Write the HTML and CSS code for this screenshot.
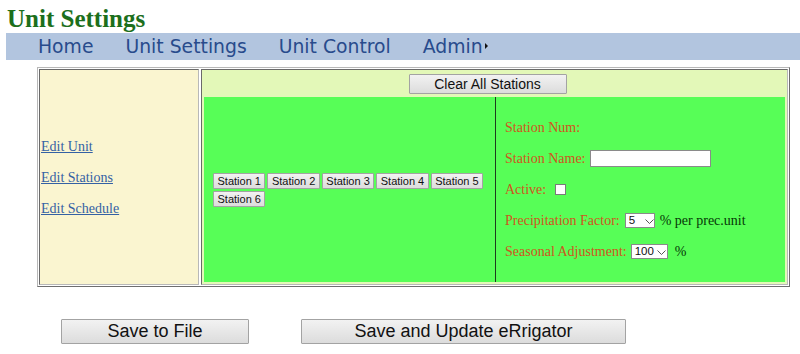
FILE: index.html
```html
<!DOCTYPE html>
<html>
<head>
<meta charset="utf-8">
<title>Unit Settings</title>
<link rel="stylesheet" href="styles.css">
</head>
<body>
<h1 class="title">Unit Settings</h1>
<nav class="nav">
  <a class="nav-item" href="#">Home</a>
  <a class="nav-item" href="#">Unit Settings</a>
  <a class="nav-item" href="#">Unit Control</a>
  <a class="nav-item" href="#">Admin<span class="caret"></span></a>
</nav>
<div class="frame">
  <div class="side">
    <a class="link" href="#">Edit Unit</a>
    <a class="link" href="#">Edit Stations</a>
    <a class="link" href="#">Edit Schedule</a>
  </div>
  <div class="main">
    <div class="toolbar"><button class="btn btn-clear">Clear All Stations</button></div>
    <div class="panel">
      <div class="stations">
        <div class="station-list">
          <button class="btn btn-station">Station 1</button>
          <button class="btn btn-station">Station 2</button>
          <button class="btn btn-station">Station 3</button>
          <button class="btn btn-station">Station 4</button>
          <button class="btn btn-station">Station 5</button>
          <button class="btn btn-station">Station 6</button>
        </div>
      </div>
      <div class="form">
        <div class="row"><span class="label">Station Num:</span></div>
        <div class="row"><span class="label">Station Name:</span><input class="text-input" type="text"></div>
        <div class="row"><span class="label">Active:</span><input class="check" type="checkbox"></div>
        <div class="row"><span class="label">Precipitation Factor:</span><select class="sel sel-precip"><option>5</option></select><span class="unit">% per prec.unit</span></div>
        <div class="row"><span class="label">Seasonal Adjustment:</span><select class="sel sel-season"><option>100</option></select><span class="unit unit-pct">%</span></div>
      </div>
    </div>
  </div>
</div>
<div class="actions">
  <button class="btn btn-big btn-save">Save to File</button>
  <button class="btn btn-big btn-update">Save and Update eRrigator</button>
</div>
</body>
</html>
```

FILE: styles.css
```css
html, body {
  margin: 0;
  padding: 0;
  background: #ffffff;
}

body {
  font-family: "Liberation Serif", "Times New Roman", serif;
  width: 800px;
  height: 354px;
  overflow: hidden;
}

.title {
  margin: 0;
  padding: 4px 0 0 7px;
  height: 33px;
  box-sizing: border-box;
  font-size: 25px;
  line-height: 29px;
  font-weight: bold;
  color: #1c6f1c;
}

.nav {
  margin-left: 6px;
  height: 27px;
  box-sizing: border-box;
  padding: 1px 0 0 32px;
  background: #b2c5df;
  display: flex;
  gap: 32px;
  font-family: "DejaVu Sans", Verdana, sans-serif;
  font-size: 18.8px;
  line-height: 26px;
}

.nav-item {
  color: #284b8c;
  text-decoration: none;
  display: flex;
  align-items: center;
}

.caret {
  display: inline-block;
  width: 0;
  height: 0;
  margin-left: 2px;
  margin-top: -2px;
  border-left: 3px solid #111;
  border-top: 3px solid transparent;
  border-bottom: 3px solid transparent;
}

.frame {
  margin: 7px 0 0 37px;
  width: 753px;
  height: 220px;
  box-sizing: border-box;
  border: 1px solid;
  border-color: #b8b8b8 #6e6e6e #6e6e6e #b8b8b8;
  padding: 1px;
  display: flex;
  gap: 2px;
}

.side {
  width: 160px;
  box-sizing: border-box;
  border: 1px solid;
  border-color: #6a6a6a #b8b8b8 #b8b8b8 #6a6a6a;
  background: #faf5d0;
  display: flex;
  flex-direction: column;
  justify-content: center;
  gap: 14px;
  padding: 0 0 0 1px;
}

.link {
  font-size: 14px;
  line-height: 17px;
  color: #3461a4;
  text-decoration: underline;
}

.main {
  flex: 1;
  box-sizing: border-box;
  border: 1px solid;
  border-color: #6a6a6a #b8b8b8 #b8b8b8 #6a6a6a;
  background: #e3f8b8;
  display: flex;
  flex-direction: column;
}

.toolbar {
  display: flex;
  justify-content: center;
  padding: 4px 14px 3px 0;
}

.btn {
  font-family: "Liberation Sans", Arial, sans-serif;
  color: #111;
  background: linear-gradient(#f2f2f2, #dcdcdc);
  border: 1px solid #a3a3a3;
  border-radius: 1px;
  margin: 0;
  box-sizing: border-box;
  cursor: pointer;
}

.btn-clear {
  width: 158px;
  height: 20px;
  font-size: 14px;
  line-height: 18px;
  padding: 0;
}

.panel {
  flex: 1;
  margin: 0 2px 2px 2px;
  background: #57fe57;
  display: flex;
}

.stations {
  width: 292px;
  border-right: 1px solid #1e3a1e;
  display: flex;
  flex-direction: column;
  justify-content: center;
  padding-left: 9px;
  box-sizing: border-box;
}

.station-list {
  display: flex;
  flex-wrap: wrap;
  gap: 2px;
  padding-top: 0;
}

.btn-station {
  height: 16px;
  font-size: 11px;
  line-height: 14px;
  padding: 0 3.5px;
}

.form {
  flex: 1;
  padding-left: 9px;
  display: flex;
  flex-direction: column;
  justify-content: center;
  gap: 14px;
  font-size: 14px;
}

.row {
  height: 17px;
  display: flex;
  align-items: center;
  white-space: nowrap;
}

.label {
  color: #cf5520;
}

.text-input {
  margin-left: 4px;
  width: 121px;
  height: 17px;
  box-sizing: border-box;
  border: 1px solid #8a8a8a;
  background: #fff;
  padding: 0;
}

.check {
  appearance: none;
  -webkit-appearance: none;
  margin: 0 0 0 9px;
  width: 11px;
  height: 11px;
  box-sizing: border-box;
  border: 1px solid #7a7a7a;
  background: #fff;
}

.sel {
  appearance: none;
  -webkit-appearance: none;
  height: 15px;
  box-sizing: border-box;
  border: 1px solid #8a8a8a;
  border-radius: 0;
  background: #fff url("data:image/svg+xml,%3Csvg xmlns='http://www.w3.org/2000/svg' width='9' height='5'%3E%3Cpath d='M0.5 0.5 L4.5 4.5 L8.5 0.5' fill='none' stroke='%23555' stroke-width='1'/%3E%3C/svg%3E") no-repeat;
  font-family: "Liberation Sans", Arial, sans-serif;
  font-size: 11.5px;
  line-height: 13px;
  color: #111;
  padding: 0 0 0 3px;
  margin: 0;
}

.sel-precip {
  width: 30px;
  margin-left: 5px;
  background-position: 19px 5px;
}

.sel-season {
  width: 37px;
  margin-left: 4px;
  background-position: 25px 5px;
}

.unit {
  margin-left: 5px;
  color: #063806;
}

.unit-pct {
  margin-left: 7px;
}

.actions {
  display: flex;
  gap: 52px;
  margin: 32px 0 0 61px;
}

.btn-big {
  height: 25px;
  font-size: 18px;
  line-height: 23px;
  padding: 0;
}

.btn-save {
  width: 188px;
}

.btn-update {
  width: 325px;
}
```
